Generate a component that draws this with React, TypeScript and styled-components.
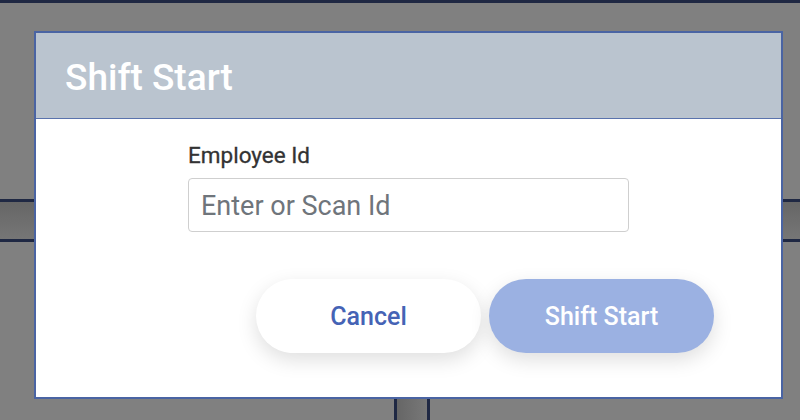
import React from "react";
import styled, { createGlobalStyle } from "styled-components";

const GlobalStyle = createGlobalStyle`
  html, body {
    margin: 0;
    padding: 0;
    background: #808080;
    overflow: hidden;
  }
  * { box-sizing: border-box; }
  #root { height: 420px; }
`;

const Page = styled.div`
  height: 420px;
  display: grid;
  grid-template-rows: 3px 196px 43px 1fr;
  background: #808080;
`;

const TopLine = styled.div`
  background: #1f2843;
`;

const Band = styled.div`
  border-top: 3px solid #1f2843;
  border-bottom: 3px solid #1f2843;
  background: linear-gradient(#666666, #767676);
`;

const Lower = styled.div`
  display: flex;
  padding-left: 394px;
`;

const Column = styled.div`
  width: 36px;
  border-left: 3px solid #1f2843;
  border-right: 3px solid #1f2843;
  background: linear-gradient(90deg, #666666, #787878);
`;

const Dialog = styled.div`
  position: fixed;
  left: 34px;
  top: 31px;
  width: 749px;
  height: 368px;
  border: 2px solid #4a64a3;
  background: #ffffff;
  display: flex;
  flex-direction: column;
  font-family: Roboto, "Liberation Sans", sans-serif;
`;

const Header = styled.div`
  height: 86px;
  flex: none;
  display: flex;
  align-items: center;
  padding: 3px 0 0 29px;
  background: #bac4cf;
  border-bottom: 1px solid #5a73ad;
`;

const Title = styled.h1`
  margin: 0;
  font-size: 37px;
  font-weight: 500;
  color: #ffffff;
  line-height: 1;
`;

const Body = styled.div`
  flex: 1;
  display: flex;
  flex-direction: column;
  padding-top: 23px;
`;

const Field = styled.div`
  width: 441px;
  margin: 0 auto;
  display: flex;
  flex-direction: column;
  gap: 10px;
`;

const Label = styled.label`
  font-size: 22.5px;
  font-weight: 400;
  line-height: 26px;
  color: #333333;
  -webkit-text-stroke: 0.3px #333333;
`;

const Input = styled.input`
  height: 54px;
  width: 100%;
  border: 1px solid #cfcfcf;
  border-radius: 4px;
  padding: 2px 12px 0;
  font-family: Roboto, "Liberation Sans", sans-serif;
  font-size: 27px;
  color: #333;
  outline: none;
  &::placeholder {
    color: #6f757b;
  }
`;

const Footer = styled.div`
  display: flex;
  justify-content: flex-end;
  gap: 8px;
  margin-top: 47px;
  padding-right: 67px;
`;

const Button = styled.button<{ $primary?: boolean }>`
  width: 225px;
  height: 74px;
  border: none;
  border-radius: 37px;
  font-family: Roboto, "Liberation Sans", sans-serif;
  font-size: 25px;
  font-weight: 500;
  padding-top: 2px;
  background: ${(p) => (p.$primary ? "#9bb1e2" : "#ffffff")};
  color: ${(p) => (p.$primary ? "#ffffff" : "#4563b5")};
  box-shadow: 0 7px 20px rgba(0, 0, 0, 0.13);
  cursor: pointer;
`;

export default function App() {
  return (
    <>
      <GlobalStyle />
      <Page>
        <TopLine />
        <div />
        <Band />
        <Lower>
          <Column />
        </Lower>
      </Page>
      <Dialog>
        <Header>
          <Title>Shift Start</Title>
        </Header>
        <Body>
          <Field>
            <Label htmlFor="emp">Employee Id</Label>
            <Input id="emp" placeholder="Enter or Scan Id" />
          </Field>
          <Footer>
            <Button>Cancel</Button>
            <Button $primary>Shift Start</Button>
          </Footer>
        </Body>
      </Dialog>
    </>
  );
}
